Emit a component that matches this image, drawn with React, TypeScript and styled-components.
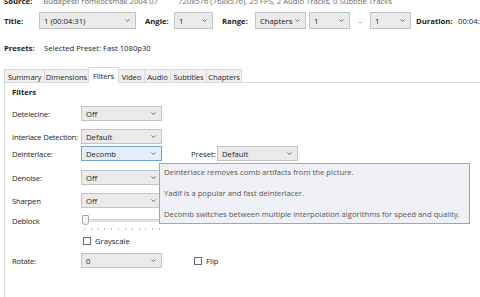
import React from "react";
import styled, { createGlobalStyle } from "styled-components";

const Global = createGlobalStyle`
  html, body {
    margin: 0;
    padding: 0;
    background: #ffffff;
    overflow: hidden;
  }
  body {
    font-family: "Open Sans", "Noto Sans", sans-serif;
    font-size: 7.7px;
    color: #1b1b1b;
    width: 480px;
    height: 297px;
  }
`;

const tabs = [
  { name: "Summary", w: 41 },
  { name: "Dimensions", w: 45 },
  { name: "Filters", w: 31, active: true },
  { name: "Video", w: 27 },
  { name: "Audio", w: 27 },
  { name: "Subtitles", w: 37 },
  { name: "Chapters", w: 36 },
];

const Chevron = () => (
  <svg width="5" height="3" viewBox="0 0 5 3">
    <polyline points="0.5,0.5 2.5,2.5 4.5,0.5" fill="none" stroke="#606060" strokeWidth="0.9" />
  </svg>
);

const Combo = ({ value, w, focus }: { value: string; w: number; focus?: boolean }) => (
  <ComboBox $w={w} $focus={focus}>
    <span>{value}</span>
    <Chevron />
  </ComboBox>
);

const App = () => {
  return (
    <Window>
      <Global />
      <SourceRow>
        <Bold>Source:</Bold>
        <Dim $ml={11}>Budapesti romkocsmak 2004 07</Dim>
        <Dim $ml={20}>720x576 (768x576), 25 FPS, 2 Audio Tracks, 0 Subtitle Tracks</Dim>
      </SourceRow>

      <TopRow>
        <Bold $w={35}>Title:</Bold>
        <Combo value="1 (00:04:31)" w={97} />
        <Bold $w={29} $ml={9}>Angle:</Bold>
        <Combo value="1" w={39} />
        <Bold $w={33} $ml={9}>Range:</Bold>
        <Combo value="Chapters" w={51} />
        <Gap $w={3} />
        <Combo value="1" w={41} />
        <Dash>-</Dash>
        <Combo value="1" w={41} />
        <Bold $w={42} $ml={5}>Duration:</Bold>
        <Plain>00:04:31</Plain>
      </TopRow>

      <PresetRow>
        <Bold $w={40}>Presets:</Bold>
        <Plain>Selected Preset: Fast 1080p30</Plain>
      </PresetRow>

      <TabStrip>
        {tabs.map((t) => (
          <Tab key={t.name} $w={t.w} $active={t.active}>
            {t.name}
          </Tab>
        ))}
      </TabStrip>

      <Panel>
        <Heading>Filters</Heading>

        <FormRow $top={8}>
          <FieldLabel>Detelecine:</FieldLabel>
          <Combo value="Off" w={81} />
        </FormRow>

        <FormRow $top={8}>
          <FieldLabel>Interlace Detection:</FieldLabel>
          <Combo value="Default" w={81} />
        </FormRow>

        <FormRow $top={2}>
          <FieldLabel>Deinterlace:</FieldLabel>
          <Combo value="Decomb" w={81} focus />
          <PresetLabel>Preset:</PresetLabel>
          <Combo value="Default" w={81} />
        </FormRow>

        <FormRow $top={9}>
          <FieldLabel>Denoise:</FieldLabel>
          <Combo value="Off" w={81} />
        </FormRow>

        <FormRow $top={8}>
          <FieldLabel>Sharpen</FieldLabel>
          <Combo value="Off" w={81} />
        </FormRow>

        <SliderRow>
          <FieldLabel>Deblock</FieldLabel>
          <Slider>
            <Track />
            <Thumb />
            <Ticks>
              {Array.from({ length: 12 }).map((_, i) => (
                <Tick key={i} />
              ))}
            </Ticks>
          </Slider>
        </SliderRow>

        <CheckRow>
          <FieldLabel />
          <Check>
            <Box />
            <span>Grayscale</span>
          </Check>
        </CheckRow>

        <FormRow $top={7}>
          <FieldLabel>Rotate:</FieldLabel>
          <Combo value="0" w={81} />
          <Check $ml={32}>
            <Box />
            <span>Flip</span>
          </Check>
        </FormRow>

        <Tooltip>
          <p>Deinterlace removes comb artifacts from the picture.</p>
          <p>Yadif is a popular and fast deinterlacer.</p>
          <p>Decomb switches between multiple interpolation algorithms for speed and quality.</p>
        </Tooltip>
      </Panel>
    </Window>
  );
};

export default App;

const Window = styled.div`
  position: relative;
  display: flex;
  flex-direction: column;
  padding-left: 4px;
  margin-top: -5px;
  height: 302px;
  overflow: hidden;
`;

const SourceRow = styled.div`
  display: flex;
  align-items: center;
  height: 11px;
  flex: none;
  white-space: nowrap;
`;

const Bold = styled.div<{ $w?: number; $ml?: number }>`
  font-weight: 700;
  white-space: nowrap;
  flex: none;
  ${(p) => (p.$w ? `width: ${p.$w}px;` : "")}
  margin-left: ${(p) => p.$ml ?? 0}px;
`;

const Dim = styled.div<{ $ml?: number }>`
  color: #6a6a6a;
  white-space: nowrap;
  margin-left: ${(p) => p.$ml ?? 0}px;
`;

const Plain = styled.div`
  white-space: nowrap;
`;

const TopRow = styled.div`
  display: flex;
  align-items: center;
  flex: none;
  height: 17px;
  margin-top: 6px;
`;

const Gap = styled.div<{ $w: number }>`
  width: ${(p) => p.$w}px;
  flex: none;
`;

const Dash = styled.div`
  width: 20px;
  flex: none;
  text-align: center;
`;

const PresetRow = styled.div`
  display: flex;
  align-items: center;
  flex: none;
  height: 10px;
  margin-top: 14px;
`;

const ComboBox = styled.div<{ $w: number; $focus?: boolean }>`
  box-sizing: border-box;
  flex: none;
  width: ${(p) => p.$w}px;
  height: 100%;
  min-height: 15px;
  display: flex;
  align-items: center;
  justify-content: space-between;
  padding: 0 5px 0 4px;
  background: ${(p) => (p.$focus ? "#e3eef9" : "#eaeaea")};
  border: 1px solid ${(p) => (p.$focus ? "#6ea5d8" : "#c4c4c4")};
  color: #1b1b1b;
  white-space: nowrap;
`;

const TabStrip = styled.div`
  display: flex;
  align-items: flex-end;
  flex: none;
  height: 16px;
  margin-top: 14px;
`;

const Tab = styled.div<{ $w: number; $active?: boolean }>`
  box-sizing: border-box;
  width: ${(p) => p.$w}px;
  height: ${(p) => (p.$active ? 16 : 14)}px;
  display: flex;
  align-items: center;
  justify-content: center;
  margin-right: -1px;
  background: ${(p) => (p.$active ? "#ffffff" : "#f0f0f0")};
  border: 1px solid #d9d9d9;
  border-bottom: none;
  position: relative;
  z-index: ${(p) => (p.$active ? 1 : 0)};
  color: #262626;
  letter-spacing: -0.1px;
  white-space: nowrap;
`;

const Panel = styled.div`
  position: relative;
  flex: 1;
  border-top: 1px solid #d9d9d9;
  border-left: 1px solid #d9d9d9;
  margin-top: -1px;
  padding: 3px 0 0 7px;
`;

const Heading = styled.div`
  font-weight: 700;
  height: 12px;
  display: flex;
  align-items: center;
`;

const FormRow = styled.div<{ $top: number }>`
  display: flex;
  align-items: center;
  height: 15px;
  margin-top: ${(p) => p.$top}px;
`;

const FieldLabel = styled.div`
  width: 69px;
  flex: none;
  letter-spacing: -0.2px;
  white-space: nowrap;
`;

const PresetLabel = styled.div`
  margin-left: 29px;
  width: 26px;
  flex: none;
`;

const SliderRow = styled.div`
  display: flex;
  align-items: flex-start;
  height: 18px;
  margin-top: 5px;
  line-height: 16px;
`;

const Slider = styled.div`
  position: relative;
  width: 81px;
  height: 18px;
`;

const Track = styled.div`
  position: absolute;
  left: 2px;
  right: 0;
  top: 6px;
  height: 2px;
  background: #e2e2e2;
  border-top: 1px solid #d0d0d0;
`;

const Thumb = styled.div`
  position: absolute;
  left: 1px;
  top: 2px;
  width: 5px;
  height: 8px;
  background: #f4f4f4;
  border: 1px solid #a9a9a9;
  border-radius: 1px 1px 3px 3px;
`;

const Ticks = styled.div`
  position: absolute;
  left: 3px;
  right: 2px;
  top: 15px;
  display: flex;
  justify-content: space-between;
`;

const Tick = styled.div`
  width: 1px;
  height: 2px;
  background: #c4c4c4;
`;

const CheckRow = styled.div`
  display: flex;
  align-items: center;
  height: 10px;
  margin-top: 5px;
`;

const Check = styled.div<{ $ml?: number }>`
  display: flex;
  align-items: center;
  gap: 4px;
  margin-left: ${(p) => (p.$ml ?? 2)}px;
  white-space: nowrap;
`;

const Box = styled.div`
  box-sizing: border-box;
  width: 8px;
  height: 8px;
  border: 1px solid #6e6e6e;
  background: #ffffff;
`;

const Tooltip = styled.div`
  position: absolute;
  left: 154px;
  top: 80px;
  box-sizing: border-box;
  width: 311px;
  height: 61px;
  padding: 3px 4px;
  background: #eef0f5;
  border: 1px solid #a3a6ab;
  color: #575757;
  display: flex;
  flex-direction: column;
  justify-content: space-between;
  p {
    margin: 0;
    white-space: nowrap;
    line-height: 11px;
  }
`;
